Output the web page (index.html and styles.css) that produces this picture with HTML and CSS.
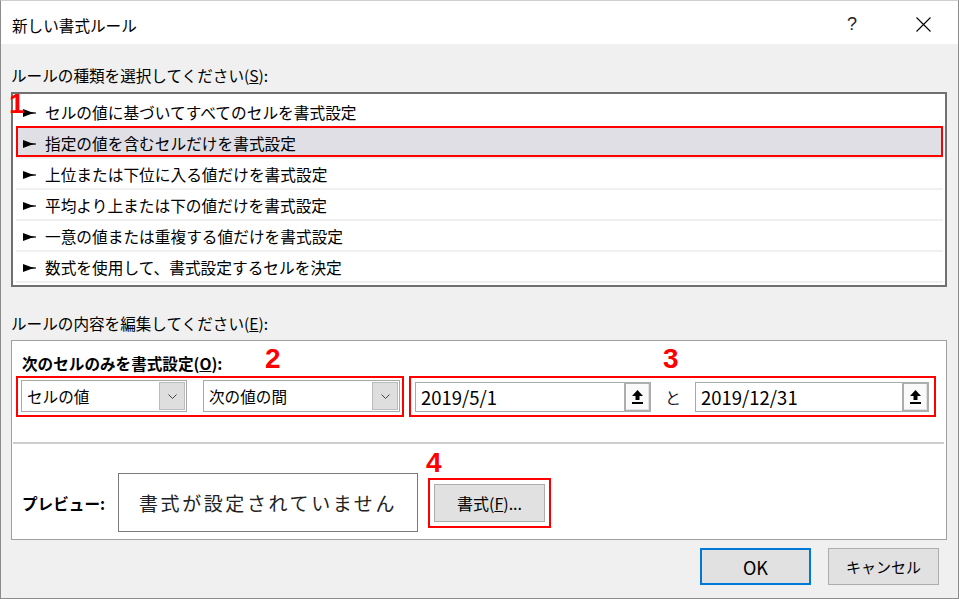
FILE: index.html
```html
<!DOCTYPE html>
<html lang="ja">
<head>
    <meta charset="UTF-8">
    <meta name="viewport" content="width=device-width, initial-scale=1.0">
    <title>新しい書式ルール</title>
    <link rel="stylesheet" href="styles.css">
</head>
<body>
    <div class="dialog">
        <!-- Barre de titre -->
        <div class="titlebar">
            <span class="title">新しい書式ルール</span>
            <span class="help">?</span>
            <span class="close">
                <svg width="15" height="15" viewBox="0 0 15 15"><path d="M0.5 0.5 L14.5 14.5 M14.5 0.5 L0.5 14.5" stroke="#000" stroke-width="1.1" fill="none"/></svg>
            </span>
        </div>

        <div class="dialog-body">
            <div class="section-label">ルールの種類を選択してください(<u>S</u>):</div>

            <div class="rule-list">
                <div class="rule-item"><svg class="pointer" width="13" height="8" viewBox="0 0 13 8"><polygon points="0,0 8,3 13,3.4 13,4.6 8,5 0,8"/></svg>セルの値に基づいてすべてのセルを書式設定</div>
                <div class="rule-item selected"><svg class="pointer" width="13" height="8" viewBox="0 0 13 8"><polygon points="0,0 8,3 13,3.4 13,4.6 8,5 0,8"/></svg>指定の値を含むセルだけを書式設定</div>
                <div class="rule-item"><svg class="pointer" width="13" height="8" viewBox="0 0 13 8"><polygon points="0,0 8,3 13,3.4 13,4.6 8,5 0,8"/></svg>上位または下位に入る値だけを書式設定</div>
                <div class="rule-item"><svg class="pointer" width="13" height="8" viewBox="0 0 13 8"><polygon points="0,0 8,3 13,3.4 13,4.6 8,5 0,8"/></svg>平均より上または下の値だけを書式設定</div>
                <div class="rule-item"><svg class="pointer" width="13" height="8" viewBox="0 0 13 8"><polygon points="0,0 8,3 13,3.4 13,4.6 8,5 0,8"/></svg>一意の値または重複する値だけを書式設定</div>
                <div class="rule-item"><svg class="pointer" width="13" height="8" viewBox="0 0 13 8"><polygon points="0,0 8,3 13,3.4 13,4.6 8,5 0,8"/></svg>数式を使用して、書式設定するセルを決定</div>
                <span class="mark mark-1">1</span>
            </div>

            <div class="section-label label-edit">ルールの内容を編集してください(<u>E</u>):</div>

            <div class="edit-box">
                <div class="edit-head">次のセルのみを書式設定(<u>O</u>):</div>

                <div class="cond-row">
                    <div class="hl hl-2">
                        <span class="mark mark-2">2</span>
                        <div class="combo combo-a">
                            <span class="combo-text">セルの値</span>
                            <span class="drop"><svg width="9" height="5" viewBox="0 0 9 5"><path d="M0.5 0.5 L4.5 4.5 L8.5 0.5" stroke="#444" fill="none"/></svg></span>
                        </div>
                        <div class="combo combo-b">
                            <span class="combo-text">次の値の間</span>
                            <span class="drop"><svg width="9" height="5" viewBox="0 0 9 5"><path d="M0.5 0.5 L4.5 4.5 L8.5 0.5" stroke="#444" fill="none"/></svg></span>
                        </div>
                    </div>

                    <div class="hl hl-3">
                        <span class="mark mark-3">3</span>
                        <div class="ref-field field-a">
                            <span class="ref-text">2019/5/1</span>
                            <span class="ref-btn"><svg width="11" height="14" viewBox="0 0 11 14"><polygon points="5.5,0 11,6 7.5,6 7.5,10 3.5,10 3.5,6 0,6"/><rect x="0" y="12" width="11" height="2"/></svg></span>
                        </div>
                        <span class="and">と</span>
                        <div class="ref-field field-b">
                            <span class="ref-text">2019/12/31</span>
                            <span class="ref-btn"><svg width="11" height="14" viewBox="0 0 11 14"><polygon points="5.5,0 11,6 7.5,6 7.5,10 3.5,10 3.5,6 0,6"/><rect x="0" y="12" width="11" height="2"/></svg></span>
                        </div>
                    </div>
                </div>

                <div class="divider"></div>

                <div class="preview-row">
                    <span class="preview-label">プレビュー:</span>
                    <div class="preview-box">書式が設定されていません</div>
                    <div class="hl hl-4">
                        <span class="mark mark-4">4</span>
                        <button class="btn btn-format">書式(<u>F</u>)...</button>
                    </div>
                </div>
            </div>

            <div class="footer">
                <button class="btn btn-ok">OK</button>
                <button class="btn">キャンセル</button>
            </div>
        </div>
    </div>
</body>
</html>
```

FILE: styles.css
```css
body {
    margin: 0;
    padding: 0;
    background-color: #f0f0f0;
    font-family: "Noto Sans CJK JP", "Noto Sans", sans-serif;
    font-size: 16px;
    color: #000;
}
.dialog {
    width: 959px;
    height: 599px;
    box-sizing: border-box;
    border: 1px solid #8c8c8c;
    border-top-color: #cfcfcf;
    background-color: #f0f0f0; /* fond gris de la boite */
}

/* Barre de titre */
.titlebar {
    display: flex;
    align-items: center;
    height: 39px;
    padding: 4px 27px 0 11px;
    background-color: #fff;
}
.title {
    flex-grow: 1;
    line-height: 20px;
    font-size: 15.6px;
}
.help {
    font-family: "Liberation Sans", sans-serif;
    font-size: 18px;
    color: #222;
    margin-right: 59px;
}
.close svg {
    display: block;
}

.dialog-body {
    padding: 0 11px 0 10px;
}
.section-label {
    line-height: 20px;
    font-size: 15.6px;
    margin-top: 21px;
    margin-bottom: 7px;
}
.label-edit {
    margin-top: 26px;
}

/* Liste des types de regle */
.rule-list {
    position: relative;
    background-color: #fff;
    border: 2px solid #707070;
    padding: 3px 2px 2px 3px;
}
.rule-item {
    display: flex;
    align-items: center;
    gap: 9px;
    height: 29px;
    padding-left: 7px;
    line-height: 27px;
    padding-top: 2px;
    box-sizing: border-box;
    font-size: 15.7px;
}
.rule-item + .rule-item {
    height: 31px;
    border-top: 2px solid #f0f0f0;
}
.rule-item:nth-child(6) {
    border-bottom: 2px solid #f0f0f0;
    height: 33px;
}
.rule-item.selected {
    background-color: #dfdfe5;
    outline: 2px solid #f00;
    outline-offset: -2px;
}
.pointer {
    flex: none;
    fill: #000;
}

/* Numeros rouges */
.mark {
    position: absolute;
    font-family: "Liberation Sans", Arial, sans-serif;
    font-weight: bold;
    font-size: 28px;
    line-height: 1;
    color: #f00;
}
.mark-1 {
    left: -4px;
    top: -4px;
}
.mark-2 {
    left: 247px;
    top: -33px;
}
.mark-3 {
    left: 252px;
    top: -33px;
}
.mark-4 {
    left: -4px;
    top: -31px;
}

/* Zone d'edition */
.edit-box {
    height: 200px;
    box-sizing: border-box;
    background-color: #fff;
    border: 1px solid #a0a0a0;
    padding-top: 11px;
}
.edit-head {
    font-weight: bold;
    font-size: 15.6px;
    line-height: 22px;
    padding-left: 10px;
}
.cond-row {
    display: flex;
    gap: 5px;
    margin: 2px 0 0 4px;
}
.hl {
    position: relative;
    border: 2px solid #f00;
}
.hl-2 {
    display: flex;
    gap: 16px;
    padding: 2px 2px 3px 3px;
}
.hl-3 {
    display: flex;
    align-items: center;
    padding: 0 5px 0 4px;
}
.hl-4 {
    padding: 4px;
    margin-left: 10px;
}
.combo {
    display: flex;
    align-items: center;
    height: 32px;
    box-sizing: border-box;
    border: 1px solid #a9a9a9;
    background-color: #fff;
}
.combo-a {
    width: 166px;
}
.combo-b {
    width: 197px;
}
.combo-text {
    flex-grow: 1;
    padding-left: 5px;
    font-size: 15.6px;
}
.drop {
    display: flex;
    align-items: center;
    justify-content: center;
    width: 24px;
    align-self: stretch;
    margin: 1px 1px 1px 0;
    background-color: #dedede;
    border: 1px solid #bcbcbc;
}
.ref-field {
    display: flex;
    align-items: center;
    height: 30px;
    box-sizing: border-box;
    border: 1px solid #a9a9a9;
    background-color: #fff;
}
.field-a {
    width: 236px;
}
.field-b {
    width: 234px;
}
.ref-text {
    flex-grow: 1;
    padding-left: 5px;
    font-size: 18.5px;
}
.ref-btn {
    display: flex;
    align-items: center;
    justify-content: center;
    width: 27px;
    align-self: stretch;
    margin: -1px -1px -1px 0;
    box-sizing: border-box;
    border: 2px solid #adadad;
    background-color: #fafafa;
    box-shadow: inset -1px -1px #e3e3e3;
}
.and {
    width: 44px;
    text-align: center;
    font-size: 16px;
    color: #1a1a2e;
}
.divider {
    height: 2px;
    margin: 25px 2px 0 1px;
    background-color: #cdcdcd;
}
.preview-row {
    display: flex;
    align-items: center;
    margin-top: 29px;
    padding-left: 10px;
}
.preview-label {
    width: 96px;
    font-weight: bold;
    font-size: 15.6px;
}
.preview-box {
    display: flex;
    align-items: center;
    justify-content: center;
    width: 300px;
    height: 59px;
    box-sizing: border-box;
    border: 1px solid #7a7a7a;
    font-size: 19px;
    letter-spacing: 2.6px;
    color: #222;
}

/* Boutons */
.btn {
    display: block;
    box-sizing: border-box;
    background-color: #e1e1e1;
    border: 1px solid #adadad;
    font-family: inherit;
    font-size: 15px;
    color: #000;
    padding: 0;
}
.btn-format {
    width: 111px;
    height: 38px;
    font-size: 16px;
}
.footer {
    display: flex;
    justify-content: flex-end;
    gap: 17px;
    margin-top: 8px;
    padding-right: 8px;
}
.footer .btn {
    width: 111px;
    height: 37px;
}
.footer .btn-ok {
    border: 2px solid #0078d7; /* bouton par defaut */
    font-size: 18px;
}
```
